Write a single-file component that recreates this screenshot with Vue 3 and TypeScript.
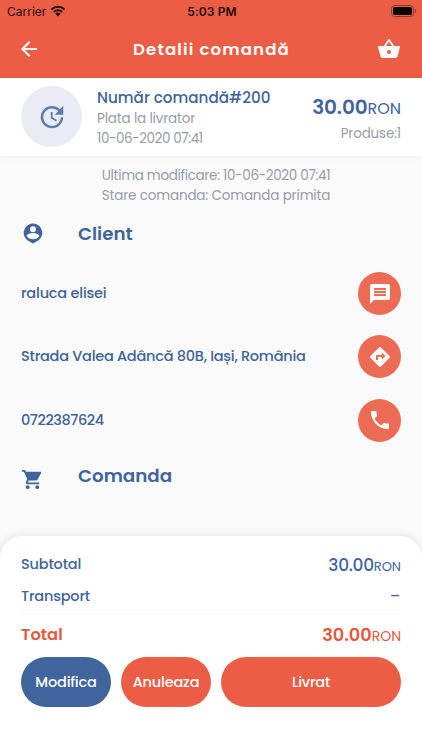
<script setup lang="ts">
interface Contact {
  key: string
  text: string
  label: string
  icon: string
}

const contacts: Contact[] = [
  {
    key: 'name',
    text: 'raluca elisei',
    label: 'Mesaj',
    icon: 'M20 2H4c-1.1 0-1.99.9-1.99 2L2 22l4-4h14c1.1 0 2-.9 2-2V4c0-1.1-.9-2-2-2zm-2 12H6v-2h12v2zm0-3H6V9h12v2zm0-3H6V6h12v2z',
  },
  {
    key: 'address',
    text: 'Strada Valea Adâncă 80B, Iași, România',
    label: 'Navigare',
    icon: 'M21.71 11.29l-9-9c-.39-.39-1.02-.39-1.41 0l-9 9c-.39.39-.39 1.02 0 1.41l9 9c.39.39 1.02.39 1.41 0l9-9c.39-.38.39-1.01 0-1.41zM14 14.5V12h-4v3H8v-4c0-.55.45-1 1-1h5V7.5l3.5 3.5-3.5 3.5z',
  },
  {
    key: 'phone',
    text: '0722387624',
    label: 'Apel',
    icon: 'M6.62 10.79c1.44 2.83 3.76 5.14 6.59 6.59l2.2-2.2c.27-.27.67-.36 1.02-.24 1.12.37 2.33.57 3.57.57.55 0 1 .45 1 1V20c0 .55-.45 1-1 1-9.39 0-17-7.61-17-17 0-.55.45-1 1-1h3.5c.55 0 1 .45 1 1 0 1.25.2 2.45.57 3.57.11.35.03.74-.25 1.02l-2.2 2.2z',
  },
]
</script>

<template>
  <div class="screen">
    <header class="top">
      <div class="status">
        <div class="carrier">
          <span>Carrier</span>
          <svg class="wifi" viewBox="0 0 16 12">
            <path d="M1.4 4.5a9.6 9.6 0 0 1 13.2 0" />
            <path d="M3.8 7a6.1 6.1 0 0 1 8.4 0" />
            <path class="dot" d="M8 11.4L5.3 8.8a3.9 3.9 0 0 1 5.4 0z" />
          </svg>
        </div>
        <span class="clock">5:03 PM</span>
        <svg class="battery" viewBox="0 0 26 12">
          <rect class="shell" x=".5" y=".5" width="22" height="11" rx="3" />
          <rect x="2" y="2" width="19" height="8" rx="1.6" />
          <path class="tip" d="M24 4v4c.8-.3 1.3-1.1 1.3-2S24.8 4.3 24 4z" />
        </svg>
      </div>
      <nav class="bar">
        <svg class="icon" viewBox="0 0 24 24">
          <path d="M20 11H7.83l5.59-5.59L12 4l-8 8 8 8 1.41-1.41L7.83 13H20v-2z" />
        </svg>
        <h1>Detalii comandă</h1>
        <svg class="icon" viewBox="0 0 24 24">
          <path d="M17.21 9l-4.38-6.56c-.19-.28-.51-.42-.83-.42-.32 0-.64.14-.83.43L6.79 9H2c-.55 0-1 .45-1 1 0 .09.01.18.04.27l2.54 9.27c.23.84 1 1.46 1.92 1.46h13c.92 0 1.69-.62 1.93-1.46l2.54-9.27L23 10c0-.55-.45-1-1-1h-4.79zM9 9l3-4.4L15 9H9zm3 8c-1.1 0-2-.9-2-2s.9-2 2-2 2 .9 2 2-.9 2-2 2z" />
        </svg>
      </nav>
    </header>

    <section class="summary">
      <div class="badge">
        <svg viewBox="0 0 24 24">
          <path d="M21 10.12h-6.78l2.74-2.82c-2.73-2.7-7.15-2.8-9.88-.1-2.73 2.71-2.73 7.08 0 9.79s7.15 2.71 9.88 0C18.32 15.65 19 14.08 19 12.1h2c0 1.98-.88 4.55-2.64 6.29-3.51 3.48-9.21 3.48-12.72 0-3.5-3.47-3.53-9.11-.02-12.58s9.14-3.47 12.65 0L21 3v7.12zM12.5 8v4.25l3.5 2.08-.72 1.21L11 13V8h1.5z" />
        </svg>
      </div>
      <div class="order">
        <div class="number">Număr comandă#200</div>
        <div class="muted payment">Plata la livrator</div>
        <div class="muted date">10-06-2020 07:41</div>
      </div>
      <div class="totals">
        <div class="price"><b>30.00</b><span>RON</span></div>
        <div class="muted count">Produse:1</div>
      </div>
    </section>

    <main class="content">
      <div class="state">
        <div class="muted changed">Ultima modificare: 10-06-2020 07:41</div>
        <div class="muted stage">Stare comanda: Comanda primita</div>
      </div>

      <div class="heading">
        <svg class="pin" viewBox="0 0 20 21">
          <path fill-rule="evenodd" d="M10 .6a9.3 9.3 0 0 1 3.1 18.07L10 20.6l-3.1-1.93A9.3 9.3 0 0 1 10 .6zM10 3.2a3 3 0 1 0 0 6 3 3 0 0 0 0-6zM3.7 12.9c1.2 2.2 3.4 3.3 6.3 3.3s5.1-1.1 6.3-3.3c-.5-1.9-3.7-2.8-6.3-2.8s-5.8.9-6.3 2.8z" />
        </svg>
        <h2>Client</h2>
      </div>

      <div v-for="c in contacts" :key="c.key" class="contact">
        <span :class="c.key">{{ c.text }}</span>
        <button :aria-label="c.label">
          <svg viewBox="0 0 24 24"><path :d="c.icon" /></svg>
        </button>
      </div>

      <div class="heading order-heading">
        <svg class="cart" viewBox="0 0 24 24">
          <path d="M7 18c-1.1 0-1.99.9-1.99 2S5.9 22 7 22s2-.9 2-2-.9-2-2-2zM1 2v2h2l3.6 7.59-1.35 2.45c-.16.28-.25.61-.25.96 0 1.1.9 2 2 2h12v-2H7.42c-.14 0-.25-.11-.25-.25l.03-.12.9-1.63h7.45c.75 0 1.41-.41 1.75-1.03l3.58-6.49c.08-.14.12-.31.12-.48 0-.55-.45-1-1-1H5.21l-.94-2H1zm16 16c-1.1 0-1.99.9-1.99 2s.89 2 1.99 2 2-.9 2-2-.9-2-2-2z" />
        </svg>
        <h2>Comanda</h2>
      </div>
    </main>

    <footer class="sheet">
      <div class="line">
        <span>Subtotal</span>
        <div class="amount"><b>30.00</b><span>RON</span></div>
      </div>
      <div class="line second">
        <span>Transport</span>
        <span class="dash">–</span>
      </div>
      <div class="line grand">
        <span class="total">Total</span>
        <div class="amount"><b>30.00</b><span>RON</span></div>
      </div>
      <div class="actions">
        <button class="edit">Modifica</button>
        <button class="cancel">Anuleaza</button>
        <button class="deliver">Livrat</button>
      </div>
    </footer>
  </div>
</template>

<style>
body {
  background: #fafafa;
}
</style>

<style scoped>
* {
  box-sizing: border-box;
}
.screen {
  display: flex;
  flex-direction: column;
  height: 750px;
  overflow: hidden;
  background: #fafafa;
  color: #40649c;
  font-family: Poppins, Inter, sans-serif;
  font-size: 14.5px;
  letter-spacing: -0.2px;
  white-space: nowrap;
}
svg {
  display: block;
  flex: none;
  fill: currentColor;
}
h1,
h2 {
  margin: 0;
  font-weight: 600;
}
button {
  padding: 0;
  border: 0;
  color: #fff;
  font: inherit;
  letter-spacing: inherit;
}
.top {
  flex: none;
  height: 77.5px;
  background: #eb5d44;
}
.status {
  display: grid;
  grid-template-columns: 1fr auto 1fr;
  align-items: center;
  height: 22px;
  padding: 0 5px 0 7px;
  color: #210a07;
  font-family: Inter, sans-serif;
  font-size: 12px;
  letter-spacing: 0;
}
.carrier {
  display: flex;
  align-items: center;
  gap: 4px;
}
.wifi {
  width: 16px;
  height: 12px;
  fill: none;
  stroke: currentColor;
  stroke-width: 2;
}
.wifi .dot {
  fill: currentColor;
  stroke: none;
}
.clock {
  font-weight: 600;
  letter-spacing: 0.1px;
}
.battery {
  justify-self: end;
  width: 26px;
  height: 12px;
  fill: #000;
}
.battery .shell {
  fill: none;
  stroke: #8c382a;
}
.battery .tip {
  fill: #8c382a;
}
.bar {
  display: flex;
  align-items: center;
  justify-content: space-between;
  height: 54px;
  padding: 0 21px 0 17px;
  color: #fff;
}
.icon {
  width: 24px;
  height: 24px;
}
.bar h1 {
  margin-left: 5px;
  font-size: 16.6px;
  letter-spacing: 1.1px;
}
.summary {
  display: flex;
  flex: none;
  height: 78.5px;
  padding: 8.5px 21px 0;
  background: #fff;
  box-shadow: 0 1px 6px rgba(64, 80, 130, 0.07);
}
.badge {
  display: grid;
  place-items: center;
  width: 61px;
  height: 61px;
  border-radius: 50%;
  background: #e9ecf5;
  color: #5b7cb1;
}
.badge svg {
  width: 30px;
  height: 30px;
}
.order {
  flex: 1;
  padding: 1px 0 0 15px;
}
.muted {
  color: #959cab;
  font-size: 13.5px;
  line-height: 20px;
  letter-spacing: -0.17px;
}
.number {
  font-size: 15.2px;
  font-weight: 500;
  line-height: 22px;
  letter-spacing: 0;
}
.date {
  letter-spacing: -0.42px;
}
.totals {
  padding-top: 8px;
  text-align: right;
}
.price {
  font-size: 16px;
  line-height: 26px;
  letter-spacing: 0;
}
.price b {
  font-size: 20px;
  font-weight: 600;
  letter-spacing: -0.15px;
}
.count {
  line-height: 23px;
}
.content {
  padding: 10px 21px 0;
}
.state {
  padding-left: 10px;
  text-align: center;
}
.changed {
  letter-spacing: -0.32px;
}
.state .muted {
  line-height: 19.5px;
}
.heading {
  display: flex;
  align-items: center;
  height: 57px;
}
.heading h2 {
  font-size: 18.3px;
  letter-spacing: 0;
}
.pin {
  width: 20px;
  height: 21px;
  margin: 0 35px 0 2px;
}
.contact {
  display: flex;
  align-items: center;
  justify-content: space-between;
  height: 63.3px;
  font-weight: 500;
}
.contact .address {
  letter-spacing: -0.25px;
}
.contact .phone {
  letter-spacing: -0.45px;
}
.contact button {
  display: grid;
  place-items: center;
  width: 43px;
  height: 43px;
  border-radius: 50%;
  background: #ec6b55;
}
.contact button svg {
  width: 24px;
  height: 24px;
}
.order-heading {
  height: 47px;
}
.cart {
  width: 23px;
  height: 23px;
  margin: 8px 34px 0 0;
}
.sheet {
  flex: none;
  height: 214px;
  margin-top: auto;
  padding: 13px 21px 0;
  border-radius: 22px 22px 0 0;
  background: #fff;
  box-shadow: 0 0 8px rgba(40, 50, 90, 0.13);
}
.line {
  display: flex;
  align-items: center;
  justify-content: space-between;
  height: 31px;
  font-weight: 500;
}
.second {
  height: 34px;
  padding-bottom: 1px;
  border-bottom: 1px solid #f6f6f7;
}
.dash {
  margin-right: 1px;
  font-size: 14.5px;
}
.amount {
  font-size: 13px;
  font-weight: 400;
  letter-spacing: 0;
}
.amount b {
  font-size: 17px;
  font-weight: 500;
  letter-spacing: -0.3px;
}
.grand {
  height: 43px;
  padding-bottom: 3px;
  color: #e5593f;
}
.total {
  font-size: 16.3px;
  font-weight: 600;
  letter-spacing: 0;
}
.grand .amount {
  font-size: 14px;
}
.grand .amount b {
  font-size: 17.7px;
  font-weight: 600;
  letter-spacing: 0;
}
.actions {
  display: grid;
  grid-template-columns: 90px 90px 1fr;
  gap: 10px;
}
.actions button {
  height: 50px;
  border-radius: 25px;
  background: #eb5d44;
  font-weight: 500;
}
.actions .edit {
  background: #40649c;
}
</style>
